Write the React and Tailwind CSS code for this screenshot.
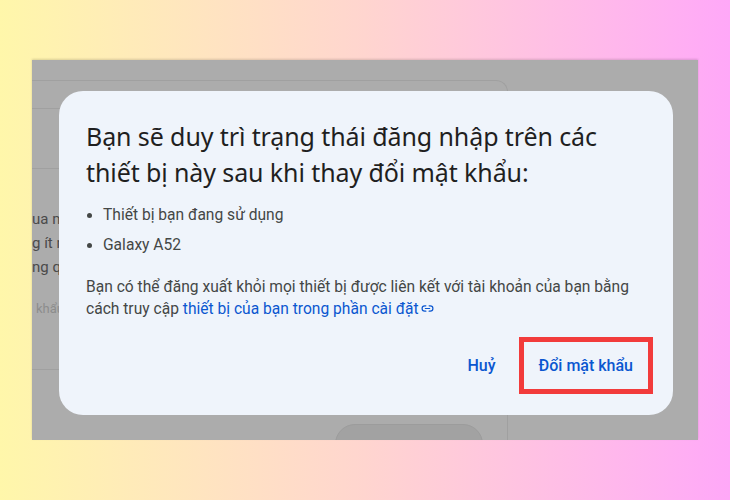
import { Link2 } from 'lucide-react';

export default function App() {
  return (
    <div className="w-[730px] h-[500px] overflow-hidden bg-gradient-to-r from-[#fff7aa] via-[#ffd5cf] to-[#ffa8f8] pt-[60px] pl-[32px]">
      <div className="relative w-[666px] h-[380px] overflow-hidden bg-[#acacac] shadow-[0_-1px_2px_rgba(0,0,0,0.15)]" style={{ fontFamily: 'Roboto, "Noto Sans", sans-serif' }}>
        {/* page behind the dialog */}
        <div className="ml-[-20px] mt-[20px] w-[496px] h-[400px] border-t border-r border-[#a0a0a0] rounded-tr-[12px]">
          <div className="mt-[27px] border-t border-[#a0a0a0]" />
          <div className="mt-[59px] border-t border-[#a0a0a0]" />
          <div className="pl-[20px] pt-[38px] text-[15px] leading-[24px] text-[#4a4a4a]">
            <p>ua mật khẩu</p>
            <p>g ít nhất</p>
            <p>ng qua</p>
            <p className="mt-[18px] pl-[4px] text-[13px] text-[#8c8c8c]">khẩu</p>
          </div>
          <div className="mt-[48px] border-t border-[#a0a0a0]" />
        </div>
        <div className="absolute left-[303px] top-[364px] w-[148px] h-[40px] rounded-full bg-[#a2a2a2] border border-[#9c9c9c]" />

        {/* dialog */}
        <div className="absolute left-[27px] top-[31px] w-[614px] h-[324px] rounded-[24px] bg-[#eff4fb] pl-[27px] pr-[20px] pt-[27px]">
          <h1 className="text-[25px] leading-[36px] text-[#1f1f1f] tracking-[-0.1px]" style={{ fontFamily: '"Noto Sans", Roboto, sans-serif' }}>
            Bạn sẽ duy trì trạng thái đăng nhập trên các thiết bị này sau khi thay đổi mật khẩu:
          </h1>
          <ul className="mt-[10px] list-disc pl-[17px] text-[15.6px] leading-[30px] text-[#444746] marker:text-[#444746]">
            <li>Thiết bị bạn đang sử dụng</li>
            <li>Galaxy A52</li>
          </ul>
          <p className="mt-[16px] text-[15.6px] leading-[22px] text-[#444746]">
            Bạn có thể đăng xuất khỏi mọi thiết bị được liên kết với tài khoản của bạn bằng cách truy cập{' '}
            <span className="text-[#0b57d0]">
              thiết bị của bạn trong phần cài đặt
              <Link2 className="inline-block w-[13px] h-[13px] ml-[2px] -mt-[2px]" strokeWidth={2.2} />
            </span>
          </p>
          <div className="mt-[17px] flex items-center justify-end gap-[23px]">
            <button className="text-[16px] font-medium text-[#0b57d0]">Huỷ</button>
            <button className="border-[5px] border-[#f23b3b] px-[15px] h-[57px] text-[16px] font-medium text-[#0b57d0]">
              Đổi mật khẩu
            </button>
          </div>
        </div>
      </div>
    </div>
  );
}
